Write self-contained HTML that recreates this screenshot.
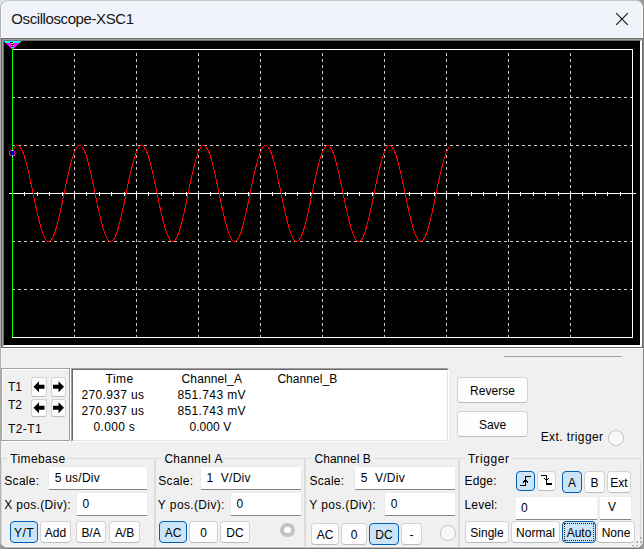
<!DOCTYPE html>
<html><head><meta charset="utf-8"><title>Oscilloscope-XSC1</title>
<style>
html,body{margin:0;padding:0}
body{width:644px;height:549px;overflow:hidden;background:#9c9c9c;position:relative;font-family:"Liberation Sans",sans-serif}
#win{position:absolute;left:0;top:0;width:642px;height:547px;background:#f0f0f0;border:1px solid;border-color:#c4c4c4 #8a8a8a #747474 #b0b0b0;border-radius:8px;overflow:hidden}
#tl{position:absolute;left:0;top:0;width:10px;height:10px;background:#e6e6e6}
#title{position:absolute;left:1px;top:1px;width:640px;height:36px;background:#f0f3f9;border:1px solid #fbfcfe;border-top:0}
#c{position:absolute;left:-1px;top:-1px;width:644px;height:549px}
.t{position:absolute;white-space:nowrap;line-height:1;color:#000}
.b{position:absolute;background:#fdfdfd;border:1px solid #d2d2d2;border-bottom-color:#bcbcbc;border-radius:4px}
.b.s{background:#cce4f7;border-color:#005fb0}
.f{position:absolute;border:1px dotted #222}
.e{position:absolute;background:#fff;box-sizing:border-box;border:1px solid #ececec;border-bottom:1px solid #868686;border-radius:2px}
.g{position:absolute;border:1px solid #dcdcdc;border-bottom-color:#f7f7f7}
.etw{position:absolute;border:1px solid #fff}
.etg{position:absolute;border:1px solid #a0a0a0}
.sunk2{position:absolute;border:1px solid;border-color:#a0a0a0 #fff #fff #a0a0a0}
.sunk2 div{position:absolute;left:0;top:0;right:0;bottom:0;background:#fff;border:1px solid;border-color:#696969 #e3e3e3 #e3e3e3 #696969}
.radio{position:absolute;width:13.5px;height:13.5px;border-radius:50%;border:1px solid #c0c0c0;background:#f8f8f8}
.ring{position:absolute;width:6.6px;height:6.6px;border-radius:50%;border:4.7px solid #c3c3c3;background:#fff}
</style></head><body>
<div id="tl"></div><div id="win"><div id="c">
<div id="title"></div>
<svg width="644" height="549" viewBox="0 0 644 549" shape-rendering="crispEdges" style="position:absolute;left:0;top:0"><rect x="1" y="38" width="642" height="310" fill="#6a6a6a"/><rect x="2" y="39" width="640" height="308" fill="#a0a0a0"/><rect x="3" y="40" width="639" height="307" fill="#707070"/><rect x="4" y="41" width="636" height="304" fill="#000"/><rect x="3" y="345" width="639" height="2" fill="#fff"/><rect x="640" y="40" width="2" height="307" fill="#fff"/><path d="M2 347 L4 345 L2 345 Z" fill="#a0a0a0"/><path d="M640 41 L642 39 L640 39 Z" fill="#a0a0a0"/><rect x="1" y="348" width="642" height="1" fill="#fff"/><rect x="13" y="49" width="620" height="1" fill="#fff"/><rect x="13" y="337" width="620" height="1" fill="#fff"/><rect x="632" y="49" width="1" height="289" fill="#fff"/><rect x="74" y="53" width="1" height="3" fill="#c8c8c8"/><rect x="74" y="59" width="1" height="3" fill="#c8c8c8"/><rect x="74" y="65" width="1" height="3" fill="#c8c8c8"/><rect x="74" y="71" width="1" height="3" fill="#c8c8c8"/><rect x="74" y="77" width="1" height="3" fill="#c8c8c8"/><rect x="74" y="83" width="1" height="3" fill="#c8c8c8"/><rect x="74" y="89" width="1" height="3" fill="#c8c8c8"/><rect x="74" y="95" width="1" height="3" fill="#c8c8c8"/><rect x="74" y="101" width="1" height="3" fill="#c8c8c8"/><rect x="74" y="107" width="1" height="3" fill="#c8c8c8"/><rect x="74" y="113" width="1" height="3" fill="#c8c8c8"/><rect x="74" y="119" width="1" height="3" fill="#c8c8c8"/><rect x="74" y="125" width="1" height="3" fill="#c8c8c8"/><rect x="74" y="131" width="1" height="3" fill="#c8c8c8"/><rect x="74" y="137" width="1" height="3" fill="#c8c8c8"/><rect x="74" y="143" width="1" height="3" fill="#c8c8c8"/><rect x="74" y="149" width="1" height="3" fill="#c8c8c8"/><rect x="74" y="155" width="1" height="3" fill="#c8c8c8"/><rect x="74" y="161" width="1" height="3" fill="#c8c8c8"/><rect x="74" y="167" width="1" height="3" fill="#c8c8c8"/><rect x="74" y="173" width="1" height="3" fill="#c8c8c8"/><rect x="74" y="179" width="1" height="3" fill="#c8c8c8"/><rect x="74" y="185" width="1" height="3" fill="#c8c8c8"/><rect x="74" y="191" width="1" height="3" fill="#c8c8c8"/><rect x="74" y="197" width="1" height="3" fill="#c8c8c8"/><rect x="74" y="203" width="1" height="3" fill="#c8c8c8"/><rect x="74" y="209" width="1" height="3" fill="#c8c8c8"/><rect x="74" y="215" width="1" height="3" fill="#c8c8c8"/><rect x="74" y="221" width="1" height="3" fill="#c8c8c8"/><rect x="74" y="227" width="1" height="3" fill="#c8c8c8"/><rect x="74" y="233" width="1" height="3" fill="#c8c8c8"/><rect x="74" y="239" width="1" height="3" fill="#c8c8c8"/><rect x="74" y="245" width="1" height="3" fill="#c8c8c8"/><rect x="74" y="251" width="1" height="3" fill="#c8c8c8"/><rect x="74" y="257" width="1" height="3" fill="#c8c8c8"/><rect x="74" y="263" width="1" height="3" fill="#c8c8c8"/><rect x="74" y="269" width="1" height="3" fill="#c8c8c8"/><rect x="74" y="275" width="1" height="3" fill="#c8c8c8"/><rect x="74" y="281" width="1" height="3" fill="#c8c8c8"/><rect x="74" y="287" width="1" height="3" fill="#c8c8c8"/><rect x="74" y="293" width="1" height="3" fill="#c8c8c8"/><rect x="74" y="299" width="1" height="3" fill="#c8c8c8"/><rect x="74" y="305" width="1" height="3" fill="#c8c8c8"/><rect x="74" y="311" width="1" height="3" fill="#c8c8c8"/><rect x="74" y="317" width="1" height="3" fill="#c8c8c8"/><rect x="74" y="323" width="1" height="3" fill="#c8c8c8"/><rect x="74" y="329" width="1" height="3" fill="#c8c8c8"/><rect x="74" y="335" width="1" height="2" fill="#c8c8c8"/><rect x="136" y="53" width="1" height="3" fill="#c8c8c8"/><rect x="136" y="59" width="1" height="3" fill="#c8c8c8"/><rect x="136" y="65" width="1" height="3" fill="#c8c8c8"/><rect x="136" y="71" width="1" height="3" fill="#c8c8c8"/><rect x="136" y="77" width="1" height="3" fill="#c8c8c8"/><rect x="136" y="83" width="1" height="3" fill="#c8c8c8"/><rect x="136" y="89" width="1" height="3" fill="#c8c8c8"/><rect x="136" y="95" width="1" height="3" fill="#c8c8c8"/><rect x="136" y="101" width="1" height="3" fill="#c8c8c8"/><rect x="136" y="107" width="1" height="3" fill="#c8c8c8"/><rect x="136" y="113" width="1" height="3" fill="#c8c8c8"/><rect x="136" y="119" width="1" height="3" fill="#c8c8c8"/><rect x="136" y="125" width="1" height="3" fill="#c8c8c8"/><rect x="136" y="131" width="1" height="3" fill="#c8c8c8"/><rect x="136" y="137" width="1" height="3" fill="#c8c8c8"/><rect x="136" y="143" width="1" height="3" fill="#c8c8c8"/><rect x="136" y="149" width="1" height="3" fill="#c8c8c8"/><rect x="136" y="155" width="1" height="3" fill="#c8c8c8"/><rect x="136" y="161" width="1" height="3" fill="#c8c8c8"/><rect x="136" y="167" width="1" height="3" fill="#c8c8c8"/><rect x="136" y="173" width="1" height="3" fill="#c8c8c8"/><rect x="136" y="179" width="1" height="3" fill="#c8c8c8"/><rect x="136" y="185" width="1" height="3" fill="#c8c8c8"/><rect x="136" y="191" width="1" height="3" fill="#c8c8c8"/><rect x="136" y="197" width="1" height="3" fill="#c8c8c8"/><rect x="136" y="203" width="1" height="3" fill="#c8c8c8"/><rect x="136" y="209" width="1" height="3" fill="#c8c8c8"/><rect x="136" y="215" width="1" height="3" fill="#c8c8c8"/><rect x="136" y="221" width="1" height="3" fill="#c8c8c8"/><rect x="136" y="227" width="1" height="3" fill="#c8c8c8"/><rect x="136" y="233" width="1" height="3" fill="#c8c8c8"/><rect x="136" y="239" width="1" height="3" fill="#c8c8c8"/><rect x="136" y="245" width="1" height="3" fill="#c8c8c8"/><rect x="136" y="251" width="1" height="3" fill="#c8c8c8"/><rect x="136" y="257" width="1" height="3" fill="#c8c8c8"/><rect x="136" y="263" width="1" height="3" fill="#c8c8c8"/><rect x="136" y="269" width="1" height="3" fill="#c8c8c8"/><rect x="136" y="275" width="1" height="3" fill="#c8c8c8"/><rect x="136" y="281" width="1" height="3" fill="#c8c8c8"/><rect x="136" y="287" width="1" height="3" fill="#c8c8c8"/><rect x="136" y="293" width="1" height="3" fill="#c8c8c8"/><rect x="136" y="299" width="1" height="3" fill="#c8c8c8"/><rect x="136" y="305" width="1" height="3" fill="#c8c8c8"/><rect x="136" y="311" width="1" height="3" fill="#c8c8c8"/><rect x="136" y="317" width="1" height="3" fill="#c8c8c8"/><rect x="136" y="323" width="1" height="3" fill="#c8c8c8"/><rect x="136" y="329" width="1" height="3" fill="#c8c8c8"/><rect x="136" y="335" width="1" height="2" fill="#c8c8c8"/><rect x="198" y="53" width="1" height="3" fill="#c8c8c8"/><rect x="198" y="59" width="1" height="3" fill="#c8c8c8"/><rect x="198" y="65" width="1" height="3" fill="#c8c8c8"/><rect x="198" y="71" width="1" height="3" fill="#c8c8c8"/><rect x="198" y="77" width="1" height="3" fill="#c8c8c8"/><rect x="198" y="83" width="1" height="3" fill="#c8c8c8"/><rect x="198" y="89" width="1" height="3" fill="#c8c8c8"/><rect x="198" y="95" width="1" height="3" fill="#c8c8c8"/><rect x="198" y="101" width="1" height="3" fill="#c8c8c8"/><rect x="198" y="107" width="1" height="3" fill="#c8c8c8"/><rect x="198" y="113" width="1" height="3" fill="#c8c8c8"/><rect x="198" y="119" width="1" height="3" fill="#c8c8c8"/><rect x="198" y="125" width="1" height="3" fill="#c8c8c8"/><rect x="198" y="131" width="1" height="3" fill="#c8c8c8"/><rect x="198" y="137" width="1" height="3" fill="#c8c8c8"/><rect x="198" y="143" width="1" height="3" fill="#c8c8c8"/><rect x="198" y="149" width="1" height="3" fill="#c8c8c8"/><rect x="198" y="155" width="1" height="3" fill="#c8c8c8"/><rect x="198" y="161" width="1" height="3" fill="#c8c8c8"/><rect x="198" y="167" width="1" height="3" fill="#c8c8c8"/><rect x="198" y="173" width="1" height="3" fill="#c8c8c8"/><rect x="198" y="179" width="1" height="3" fill="#c8c8c8"/><rect x="198" y="185" width="1" height="3" fill="#c8c8c8"/><rect x="198" y="191" width="1" height="3" fill="#c8c8c8"/><rect x="198" y="197" width="1" height="3" fill="#c8c8c8"/><rect x="198" y="203" width="1" height="3" fill="#c8c8c8"/><rect x="198" y="209" width="1" height="3" fill="#c8c8c8"/><rect x="198" y="215" width="1" height="3" fill="#c8c8c8"/><rect x="198" y="221" width="1" height="3" fill="#c8c8c8"/><rect x="198" y="227" width="1" height="3" fill="#c8c8c8"/><rect x="198" y="233" width="1" height="3" fill="#c8c8c8"/><rect x="198" y="239" width="1" height="3" fill="#c8c8c8"/><rect x="198" y="245" width="1" height="3" fill="#c8c8c8"/><rect x="198" y="251" width="1" height="3" fill="#c8c8c8"/><rect x="198" y="257" width="1" height="3" fill="#c8c8c8"/><rect x="198" y="263" width="1" height="3" fill="#c8c8c8"/><rect x="198" y="269" width="1" height="3" fill="#c8c8c8"/><rect x="198" y="275" width="1" height="3" fill="#c8c8c8"/><rect x="198" y="281" width="1" height="3" fill="#c8c8c8"/><rect x="198" y="287" width="1" height="3" fill="#c8c8c8"/><rect x="198" y="293" width="1" height="3" fill="#c8c8c8"/><rect x="198" y="299" width="1" height="3" fill="#c8c8c8"/><rect x="198" y="305" width="1" height="3" fill="#c8c8c8"/><rect x="198" y="311" width="1" height="3" fill="#c8c8c8"/><rect x="198" y="317" width="1" height="3" fill="#c8c8c8"/><rect x="198" y="323" width="1" height="3" fill="#c8c8c8"/><rect x="198" y="329" width="1" height="3" fill="#c8c8c8"/><rect x="198" y="335" width="1" height="2" fill="#c8c8c8"/><rect x="260" y="53" width="1" height="3" fill="#c8c8c8"/><rect x="260" y="59" width="1" height="3" fill="#c8c8c8"/><rect x="260" y="65" width="1" height="3" fill="#c8c8c8"/><rect x="260" y="71" width="1" height="3" fill="#c8c8c8"/><rect x="260" y="77" width="1" height="3" fill="#c8c8c8"/><rect x="260" y="83" width="1" height="3" fill="#c8c8c8"/><rect x="260" y="89" width="1" height="3" fill="#c8c8c8"/><rect x="260" y="95" width="1" height="3" fill="#c8c8c8"/><rect x="260" y="101" width="1" height="3" fill="#c8c8c8"/><rect x="260" y="107" width="1" height="3" fill="#c8c8c8"/><rect x="260" y="113" width="1" height="3" fill="#c8c8c8"/><rect x="260" y="119" width="1" height="3" fill="#c8c8c8"/><rect x="260" y="125" width="1" height="3" fill="#c8c8c8"/><rect x="260" y="131" width="1" height="3" fill="#c8c8c8"/><rect x="260" y="137" width="1" height="3" fill="#c8c8c8"/><rect x="260" y="143" width="1" height="3" fill="#c8c8c8"/><rect x="260" y="149" width="1" height="3" fill="#c8c8c8"/><rect x="260" y="155" width="1" height="3" fill="#c8c8c8"/><rect x="260" y="161" width="1" height="3" fill="#c8c8c8"/><rect x="260" y="167" width="1" height="3" fill="#c8c8c8"/><rect x="260" y="173" width="1" height="3" fill="#c8c8c8"/><rect x="260" y="179" width="1" height="3" fill="#c8c8c8"/><rect x="260" y="185" width="1" height="3" fill="#c8c8c8"/><rect x="260" y="191" width="1" height="3" fill="#c8c8c8"/><rect x="260" y="197" width="1" height="3" fill="#c8c8c8"/><rect x="260" y="203" width="1" height="3" fill="#c8c8c8"/><rect x="260" y="209" width="1" height="3" fill="#c8c8c8"/><rect x="260" y="215" width="1" height="3" fill="#c8c8c8"/><rect x="260" y="221" width="1" height="3" fill="#c8c8c8"/><rect x="260" y="227" width="1" height="3" fill="#c8c8c8"/><rect x="260" y="233" width="1" height="3" fill="#c8c8c8"/><rect x="260" y="239" width="1" height="3" fill="#c8c8c8"/><rect x="260" y="245" width="1" height="3" fill="#c8c8c8"/><rect x="260" y="251" width="1" height="3" fill="#c8c8c8"/><rect x="260" y="257" width="1" height="3" fill="#c8c8c8"/><rect x="260" y="263" width="1" height="3" fill="#c8c8c8"/><rect x="260" y="269" width="1" height="3" fill="#c8c8c8"/><rect x="260" y="275" width="1" height="3" fill="#c8c8c8"/><rect x="260" y="281" width="1" height="3" fill="#c8c8c8"/><rect x="260" y="287" width="1" height="3" fill="#c8c8c8"/><rect x="260" y="293" width="1" height="3" fill="#c8c8c8"/><rect x="260" y="299" width="1" height="3" fill="#c8c8c8"/><rect x="260" y="305" width="1" height="3" fill="#c8c8c8"/><rect x="260" y="311" width="1" height="3" fill="#c8c8c8"/><rect x="260" y="317" width="1" height="3" fill="#c8c8c8"/><rect x="260" y="323" width="1" height="3" fill="#c8c8c8"/><rect x="260" y="329" width="1" height="3" fill="#c8c8c8"/><rect x="260" y="335" width="1" height="2" fill="#c8c8c8"/><rect x="322" y="53" width="1" height="3" fill="#c8c8c8"/><rect x="322" y="59" width="1" height="3" fill="#c8c8c8"/><rect x="322" y="65" width="1" height="3" fill="#c8c8c8"/><rect x="322" y="71" width="1" height="3" fill="#c8c8c8"/><rect x="322" y="77" width="1" height="3" fill="#c8c8c8"/><rect x="322" y="83" width="1" height="3" fill="#c8c8c8"/><rect x="322" y="89" width="1" height="3" fill="#c8c8c8"/><rect x="322" y="95" width="1" height="3" fill="#c8c8c8"/><rect x="322" y="101" width="1" height="3" fill="#c8c8c8"/><rect x="322" y="107" width="1" height="3" fill="#c8c8c8"/><rect x="322" y="113" width="1" height="3" fill="#c8c8c8"/><rect x="322" y="119" width="1" height="3" fill="#c8c8c8"/><rect x="322" y="125" width="1" height="3" fill="#c8c8c8"/><rect x="322" y="131" width="1" height="3" fill="#c8c8c8"/><rect x="322" y="137" width="1" height="3" fill="#c8c8c8"/><rect x="322" y="143" width="1" height="3" fill="#c8c8c8"/><rect x="322" y="149" width="1" height="3" fill="#c8c8c8"/><rect x="322" y="155" width="1" height="3" fill="#c8c8c8"/><rect x="322" y="161" width="1" height="3" fill="#c8c8c8"/><rect x="322" y="167" width="1" height="3" fill="#c8c8c8"/><rect x="322" y="173" width="1" height="3" fill="#c8c8c8"/><rect x="322" y="179" width="1" height="3" fill="#c8c8c8"/><rect x="322" y="185" width="1" height="3" fill="#c8c8c8"/><rect x="322" y="191" width="1" height="3" fill="#c8c8c8"/><rect x="322" y="197" width="1" height="3" fill="#c8c8c8"/><rect x="322" y="203" width="1" height="3" fill="#c8c8c8"/><rect x="322" y="209" width="1" height="3" fill="#c8c8c8"/><rect x="322" y="215" width="1" height="3" fill="#c8c8c8"/><rect x="322" y="221" width="1" height="3" fill="#c8c8c8"/><rect x="322" y="227" width="1" height="3" fill="#c8c8c8"/><rect x="322" y="233" width="1" height="3" fill="#c8c8c8"/><rect x="322" y="239" width="1" height="3" fill="#c8c8c8"/><rect x="322" y="245" width="1" height="3" fill="#c8c8c8"/><rect x="322" y="251" width="1" height="3" fill="#c8c8c8"/><rect x="322" y="257" width="1" height="3" fill="#c8c8c8"/><rect x="322" y="263" width="1" height="3" fill="#c8c8c8"/><rect x="322" y="269" width="1" height="3" fill="#c8c8c8"/><rect x="322" y="275" width="1" height="3" fill="#c8c8c8"/><rect x="322" y="281" width="1" height="3" fill="#c8c8c8"/><rect x="322" y="287" width="1" height="3" fill="#c8c8c8"/><rect x="322" y="293" width="1" height="3" fill="#c8c8c8"/><rect x="322" y="299" width="1" height="3" fill="#c8c8c8"/><rect x="322" y="305" width="1" height="3" fill="#c8c8c8"/><rect x="322" y="311" width="1" height="3" fill="#c8c8c8"/><rect x="322" y="317" width="1" height="3" fill="#c8c8c8"/><rect x="322" y="323" width="1" height="3" fill="#c8c8c8"/><rect x="322" y="329" width="1" height="3" fill="#c8c8c8"/><rect x="322" y="335" width="1" height="2" fill="#c8c8c8"/><rect x="384" y="53" width="1" height="3" fill="#c8c8c8"/><rect x="384" y="59" width="1" height="3" fill="#c8c8c8"/><rect x="384" y="65" width="1" height="3" fill="#c8c8c8"/><rect x="384" y="71" width="1" height="3" fill="#c8c8c8"/><rect x="384" y="77" width="1" height="3" fill="#c8c8c8"/><rect x="384" y="83" width="1" height="3" fill="#c8c8c8"/><rect x="384" y="89" width="1" height="3" fill="#c8c8c8"/><rect x="384" y="95" width="1" height="3" fill="#c8c8c8"/><rect x="384" y="101" width="1" height="3" fill="#c8c8c8"/><rect x="384" y="107" width="1" height="3" fill="#c8c8c8"/><rect x="384" y="113" width="1" height="3" fill="#c8c8c8"/><rect x="384" y="119" width="1" height="3" fill="#c8c8c8"/><rect x="384" y="125" width="1" height="3" fill="#c8c8c8"/><rect x="384" y="131" width="1" height="3" fill="#c8c8c8"/><rect x="384" y="137" width="1" height="3" fill="#c8c8c8"/><rect x="384" y="143" width="1" height="3" fill="#c8c8c8"/><rect x="384" y="149" width="1" height="3" fill="#c8c8c8"/><rect x="384" y="155" width="1" height="3" fill="#c8c8c8"/><rect x="384" y="161" width="1" height="3" fill="#c8c8c8"/><rect x="384" y="167" width="1" height="3" fill="#c8c8c8"/><rect x="384" y="173" width="1" height="3" fill="#c8c8c8"/><rect x="384" y="179" width="1" height="3" fill="#c8c8c8"/><rect x="384" y="185" width="1" height="3" fill="#c8c8c8"/><rect x="384" y="191" width="1" height="3" fill="#c8c8c8"/><rect x="384" y="197" width="1" height="3" fill="#c8c8c8"/><rect x="384" y="203" width="1" height="3" fill="#c8c8c8"/><rect x="384" y="209" width="1" height="3" fill="#c8c8c8"/><rect x="384" y="215" width="1" height="3" fill="#c8c8c8"/><rect x="384" y="221" width="1" height="3" fill="#c8c8c8"/><rect x="384" y="227" width="1" height="3" fill="#c8c8c8"/><rect x="384" y="233" width="1" height="3" fill="#c8c8c8"/><rect x="384" y="239" width="1" height="3" fill="#c8c8c8"/><rect x="384" y="245" width="1" height="3" fill="#c8c8c8"/><rect x="384" y="251" width="1" height="3" fill="#c8c8c8"/><rect x="384" y="257" width="1" height="3" fill="#c8c8c8"/><rect x="384" y="263" width="1" height="3" fill="#c8c8c8"/><rect x="384" y="269" width="1" height="3" fill="#c8c8c8"/><rect x="384" y="275" width="1" height="3" fill="#c8c8c8"/><rect x="384" y="281" width="1" height="3" fill="#c8c8c8"/><rect x="384" y="287" width="1" height="3" fill="#c8c8c8"/><rect x="384" y="293" width="1" height="3" fill="#c8c8c8"/><rect x="384" y="299" width="1" height="3" fill="#c8c8c8"/><rect x="384" y="305" width="1" height="3" fill="#c8c8c8"/><rect x="384" y="311" width="1" height="3" fill="#c8c8c8"/><rect x="384" y="317" width="1" height="3" fill="#c8c8c8"/><rect x="384" y="323" width="1" height="3" fill="#c8c8c8"/><rect x="384" y="329" width="1" height="3" fill="#c8c8c8"/><rect x="384" y="335" width="1" height="2" fill="#c8c8c8"/><rect x="446" y="53" width="1" height="3" fill="#c8c8c8"/><rect x="446" y="59" width="1" height="3" fill="#c8c8c8"/><rect x="446" y="65" width="1" height="3" fill="#c8c8c8"/><rect x="446" y="71" width="1" height="3" fill="#c8c8c8"/><rect x="446" y="77" width="1" height="3" fill="#c8c8c8"/><rect x="446" y="83" width="1" height="3" fill="#c8c8c8"/><rect x="446" y="89" width="1" height="3" fill="#c8c8c8"/><rect x="446" y="95" width="1" height="3" fill="#c8c8c8"/><rect x="446" y="101" width="1" height="3" fill="#c8c8c8"/><rect x="446" y="107" width="1" height="3" fill="#c8c8c8"/><rect x="446" y="113" width="1" height="3" fill="#c8c8c8"/><rect x="446" y="119" width="1" height="3" fill="#c8c8c8"/><rect x="446" y="125" width="1" height="3" fill="#c8c8c8"/><rect x="446" y="131" width="1" height="3" fill="#c8c8c8"/><rect x="446" y="137" width="1" height="3" fill="#c8c8c8"/><rect x="446" y="143" width="1" height="3" fill="#c8c8c8"/><rect x="446" y="149" width="1" height="3" fill="#c8c8c8"/><rect x="446" y="155" width="1" height="3" fill="#c8c8c8"/><rect x="446" y="161" width="1" height="3" fill="#c8c8c8"/><rect x="446" y="167" width="1" height="3" fill="#c8c8c8"/><rect x="446" y="173" width="1" height="3" fill="#c8c8c8"/><rect x="446" y="179" width="1" height="3" fill="#c8c8c8"/><rect x="446" y="185" width="1" height="3" fill="#c8c8c8"/><rect x="446" y="191" width="1" height="3" fill="#c8c8c8"/><rect x="446" y="197" width="1" height="3" fill="#c8c8c8"/><rect x="446" y="203" width="1" height="3" fill="#c8c8c8"/><rect x="446" y="209" width="1" height="3" fill="#c8c8c8"/><rect x="446" y="215" width="1" height="3" fill="#c8c8c8"/><rect x="446" y="221" width="1" height="3" fill="#c8c8c8"/><rect x="446" y="227" width="1" height="3" fill="#c8c8c8"/><rect x="446" y="233" width="1" height="3" fill="#c8c8c8"/><rect x="446" y="239" width="1" height="3" fill="#c8c8c8"/><rect x="446" y="245" width="1" height="3" fill="#c8c8c8"/><rect x="446" y="251" width="1" height="3" fill="#c8c8c8"/><rect x="446" y="257" width="1" height="3" fill="#c8c8c8"/><rect x="446" y="263" width="1" height="3" fill="#c8c8c8"/><rect x="446" y="269" width="1" height="3" fill="#c8c8c8"/><rect x="446" y="275" width="1" height="3" fill="#c8c8c8"/><rect x="446" y="281" width="1" height="3" fill="#c8c8c8"/><rect x="446" y="287" width="1" height="3" fill="#c8c8c8"/><rect x="446" y="293" width="1" height="3" fill="#c8c8c8"/><rect x="446" y="299" width="1" height="3" fill="#c8c8c8"/><rect x="446" y="305" width="1" height="3" fill="#c8c8c8"/><rect x="446" y="311" width="1" height="3" fill="#c8c8c8"/><rect x="446" y="317" width="1" height="3" fill="#c8c8c8"/><rect x="446" y="323" width="1" height="3" fill="#c8c8c8"/><rect x="446" y="329" width="1" height="3" fill="#c8c8c8"/><rect x="446" y="335" width="1" height="2" fill="#c8c8c8"/><rect x="508" y="53" width="1" height="3" fill="#c8c8c8"/><rect x="508" y="59" width="1" height="3" fill="#c8c8c8"/><rect x="508" y="65" width="1" height="3" fill="#c8c8c8"/><rect x="508" y="71" width="1" height="3" fill="#c8c8c8"/><rect x="508" y="77" width="1" height="3" fill="#c8c8c8"/><rect x="508" y="83" width="1" height="3" fill="#c8c8c8"/><rect x="508" y="89" width="1" height="3" fill="#c8c8c8"/><rect x="508" y="95" width="1" height="3" fill="#c8c8c8"/><rect x="508" y="101" width="1" height="3" fill="#c8c8c8"/><rect x="508" y="107" width="1" height="3" fill="#c8c8c8"/><rect x="508" y="113" width="1" height="3" fill="#c8c8c8"/><rect x="508" y="119" width="1" height="3" fill="#c8c8c8"/><rect x="508" y="125" width="1" height="3" fill="#c8c8c8"/><rect x="508" y="131" width="1" height="3" fill="#c8c8c8"/><rect x="508" y="137" width="1" height="3" fill="#c8c8c8"/><rect x="508" y="143" width="1" height="3" fill="#c8c8c8"/><rect x="508" y="149" width="1" height="3" fill="#c8c8c8"/><rect x="508" y="155" width="1" height="3" fill="#c8c8c8"/><rect x="508" y="161" width="1" height="3" fill="#c8c8c8"/><rect x="508" y="167" width="1" height="3" fill="#c8c8c8"/><rect x="508" y="173" width="1" height="3" fill="#c8c8c8"/><rect x="508" y="179" width="1" height="3" fill="#c8c8c8"/><rect x="508" y="185" width="1" height="3" fill="#c8c8c8"/><rect x="508" y="191" width="1" height="3" fill="#c8c8c8"/><rect x="508" y="197" width="1" height="3" fill="#c8c8c8"/><rect x="508" y="203" width="1" height="3" fill="#c8c8c8"/><rect x="508" y="209" width="1" height="3" fill="#c8c8c8"/><rect x="508" y="215" width="1" height="3" fill="#c8c8c8"/><rect x="508" y="221" width="1" height="3" fill="#c8c8c8"/><rect x="508" y="227" width="1" height="3" fill="#c8c8c8"/><rect x="508" y="233" width="1" height="3" fill="#c8c8c8"/><rect x="508" y="239" width="1" height="3" fill="#c8c8c8"/><rect x="508" y="245" width="1" height="3" fill="#c8c8c8"/><rect x="508" y="251" width="1" height="3" fill="#c8c8c8"/><rect x="508" y="257" width="1" height="3" fill="#c8c8c8"/><rect x="508" y="263" width="1" height="3" fill="#c8c8c8"/><rect x="508" y="269" width="1" height="3" fill="#c8c8c8"/><rect x="508" y="275" width="1" height="3" fill="#c8c8c8"/><rect x="508" y="281" width="1" height="3" fill="#c8c8c8"/><rect x="508" y="287" width="1" height="3" fill="#c8c8c8"/><rect x="508" y="293" width="1" height="3" fill="#c8c8c8"/><rect x="508" y="299" width="1" height="3" fill="#c8c8c8"/><rect x="508" y="305" width="1" height="3" fill="#c8c8c8"/><rect x="508" y="311" width="1" height="3" fill="#c8c8c8"/><rect x="508" y="317" width="1" height="3" fill="#c8c8c8"/><rect x="508" y="323" width="1" height="3" fill="#c8c8c8"/><rect x="508" y="329" width="1" height="3" fill="#c8c8c8"/><rect x="508" y="335" width="1" height="2" fill="#c8c8c8"/><rect x="570" y="53" width="1" height="3" fill="#c8c8c8"/><rect x="570" y="59" width="1" height="3" fill="#c8c8c8"/><rect x="570" y="65" width="1" height="3" fill="#c8c8c8"/><rect x="570" y="71" width="1" height="3" fill="#c8c8c8"/><rect x="570" y="77" width="1" height="3" fill="#c8c8c8"/><rect x="570" y="83" width="1" height="3" fill="#c8c8c8"/><rect x="570" y="89" width="1" height="3" fill="#c8c8c8"/><rect x="570" y="95" width="1" height="3" fill="#c8c8c8"/><rect x="570" y="101" width="1" height="3" fill="#c8c8c8"/><rect x="570" y="107" width="1" height="3" fill="#c8c8c8"/><rect x="570" y="113" width="1" height="3" fill="#c8c8c8"/><rect x="570" y="119" width="1" height="3" fill="#c8c8c8"/><rect x="570" y="125" width="1" height="3" fill="#c8c8c8"/><rect x="570" y="131" width="1" height="3" fill="#c8c8c8"/><rect x="570" y="137" width="1" height="3" fill="#c8c8c8"/><rect x="570" y="143" width="1" height="3" fill="#c8c8c8"/><rect x="570" y="149" width="1" height="3" fill="#c8c8c8"/><rect x="570" y="155" width="1" height="3" fill="#c8c8c8"/><rect x="570" y="161" width="1" height="3" fill="#c8c8c8"/><rect x="570" y="167" width="1" height="3" fill="#c8c8c8"/><rect x="570" y="173" width="1" height="3" fill="#c8c8c8"/><rect x="570" y="179" width="1" height="3" fill="#c8c8c8"/><rect x="570" y="185" width="1" height="3" fill="#c8c8c8"/><rect x="570" y="191" width="1" height="3" fill="#c8c8c8"/><rect x="570" y="197" width="1" height="3" fill="#c8c8c8"/><rect x="570" y="203" width="1" height="3" fill="#c8c8c8"/><rect x="570" y="209" width="1" height="3" fill="#c8c8c8"/><rect x="570" y="215" width="1" height="3" fill="#c8c8c8"/><rect x="570" y="221" width="1" height="3" fill="#c8c8c8"/><rect x="570" y="227" width="1" height="3" fill="#c8c8c8"/><rect x="570" y="233" width="1" height="3" fill="#c8c8c8"/><rect x="570" y="239" width="1" height="3" fill="#c8c8c8"/><rect x="570" y="245" width="1" height="3" fill="#c8c8c8"/><rect x="570" y="251" width="1" height="3" fill="#c8c8c8"/><rect x="570" y="257" width="1" height="3" fill="#c8c8c8"/><rect x="570" y="263" width="1" height="3" fill="#c8c8c8"/><rect x="570" y="269" width="1" height="3" fill="#c8c8c8"/><rect x="570" y="275" width="1" height="3" fill="#c8c8c8"/><rect x="570" y="281" width="1" height="3" fill="#c8c8c8"/><rect x="570" y="287" width="1" height="3" fill="#c8c8c8"/><rect x="570" y="293" width="1" height="3" fill="#c8c8c8"/><rect x="570" y="299" width="1" height="3" fill="#c8c8c8"/><rect x="570" y="305" width="1" height="3" fill="#c8c8c8"/><rect x="570" y="311" width="1" height="3" fill="#c8c8c8"/><rect x="570" y="317" width="1" height="3" fill="#c8c8c8"/><rect x="570" y="323" width="1" height="3" fill="#c8c8c8"/><rect x="570" y="329" width="1" height="3" fill="#c8c8c8"/><rect x="570" y="335" width="1" height="2" fill="#c8c8c8"/><rect x="12" y="97" width="3" height="1" fill="#c8c8c8"/><rect x="18" y="97" width="3" height="1" fill="#c8c8c8"/><rect x="24" y="97" width="3" height="1" fill="#c8c8c8"/><rect x="30" y="97" width="3" height="1" fill="#c8c8c8"/><rect x="36" y="97" width="3" height="1" fill="#c8c8c8"/><rect x="42" y="97" width="3" height="1" fill="#c8c8c8"/><rect x="48" y="97" width="3" height="1" fill="#c8c8c8"/><rect x="54" y="97" width="3" height="1" fill="#c8c8c8"/><rect x="60" y="97" width="3" height="1" fill="#c8c8c8"/><rect x="66" y="97" width="3" height="1" fill="#c8c8c8"/><rect x="72" y="97" width="3" height="1" fill="#c8c8c8"/><rect x="78" y="97" width="3" height="1" fill="#c8c8c8"/><rect x="84" y="97" width="3" height="1" fill="#c8c8c8"/><rect x="90" y="97" width="3" height="1" fill="#c8c8c8"/><rect x="96" y="97" width="3" height="1" fill="#c8c8c8"/><rect x="102" y="97" width="3" height="1" fill="#c8c8c8"/><rect x="108" y="97" width="3" height="1" fill="#c8c8c8"/><rect x="114" y="97" width="3" height="1" fill="#c8c8c8"/><rect x="120" y="97" width="3" height="1" fill="#c8c8c8"/><rect x="126" y="97" width="3" height="1" fill="#c8c8c8"/><rect x="132" y="97" width="3" height="1" fill="#c8c8c8"/><rect x="138" y="97" width="3" height="1" fill="#c8c8c8"/><rect x="144" y="97" width="3" height="1" fill="#c8c8c8"/><rect x="150" y="97" width="3" height="1" fill="#c8c8c8"/><rect x="156" y="97" width="3" height="1" fill="#c8c8c8"/><rect x="162" y="97" width="3" height="1" fill="#c8c8c8"/><rect x="168" y="97" width="3" height="1" fill="#c8c8c8"/><rect x="174" y="97" width="3" height="1" fill="#c8c8c8"/><rect x="180" y="97" width="3" height="1" fill="#c8c8c8"/><rect x="186" y="97" width="3" height="1" fill="#c8c8c8"/><rect x="192" y="97" width="3" height="1" fill="#c8c8c8"/><rect x="198" y="97" width="3" height="1" fill="#c8c8c8"/><rect x="204" y="97" width="3" height="1" fill="#c8c8c8"/><rect x="210" y="97" width="3" height="1" fill="#c8c8c8"/><rect x="216" y="97" width="3" height="1" fill="#c8c8c8"/><rect x="222" y="97" width="3" height="1" fill="#c8c8c8"/><rect x="228" y="97" width="3" height="1" fill="#c8c8c8"/><rect x="234" y="97" width="3" height="1" fill="#c8c8c8"/><rect x="240" y="97" width="3" height="1" fill="#c8c8c8"/><rect x="246" y="97" width="3" height="1" fill="#c8c8c8"/><rect x="252" y="97" width="3" height="1" fill="#c8c8c8"/><rect x="258" y="97" width="3" height="1" fill="#c8c8c8"/><rect x="264" y="97" width="3" height="1" fill="#c8c8c8"/><rect x="270" y="97" width="3" height="1" fill="#c8c8c8"/><rect x="276" y="97" width="3" height="1" fill="#c8c8c8"/><rect x="282" y="97" width="3" height="1" fill="#c8c8c8"/><rect x="288" y="97" width="3" height="1" fill="#c8c8c8"/><rect x="294" y="97" width="3" height="1" fill="#c8c8c8"/><rect x="300" y="97" width="3" height="1" fill="#c8c8c8"/><rect x="306" y="97" width="3" height="1" fill="#c8c8c8"/><rect x="312" y="97" width="3" height="1" fill="#c8c8c8"/><rect x="318" y="97" width="3" height="1" fill="#c8c8c8"/><rect x="324" y="97" width="3" height="1" fill="#c8c8c8"/><rect x="330" y="97" width="3" height="1" fill="#c8c8c8"/><rect x="336" y="97" width="3" height="1" fill="#c8c8c8"/><rect x="342" y="97" width="3" height="1" fill="#c8c8c8"/><rect x="348" y="97" width="3" height="1" fill="#c8c8c8"/><rect x="354" y="97" width="3" height="1" fill="#c8c8c8"/><rect x="360" y="97" width="3" height="1" fill="#c8c8c8"/><rect x="366" y="97" width="3" height="1" fill="#c8c8c8"/><rect x="372" y="97" width="3" height="1" fill="#c8c8c8"/><rect x="378" y="97" width="3" height="1" fill="#c8c8c8"/><rect x="384" y="97" width="3" height="1" fill="#c8c8c8"/><rect x="390" y="97" width="3" height="1" fill="#c8c8c8"/><rect x="396" y="97" width="3" height="1" fill="#c8c8c8"/><rect x="402" y="97" width="3" height="1" fill="#c8c8c8"/><rect x="408" y="97" width="3" height="1" fill="#c8c8c8"/><rect x="414" y="97" width="3" height="1" fill="#c8c8c8"/><rect x="420" y="97" width="3" height="1" fill="#c8c8c8"/><rect x="426" y="97" width="3" height="1" fill="#c8c8c8"/><rect x="432" y="97" width="3" height="1" fill="#c8c8c8"/><rect x="438" y="97" width="3" height="1" fill="#c8c8c8"/><rect x="444" y="97" width="3" height="1" fill="#c8c8c8"/><rect x="450" y="97" width="3" height="1" fill="#c8c8c8"/><rect x="456" y="97" width="3" height="1" fill="#c8c8c8"/><rect x="462" y="97" width="3" height="1" fill="#c8c8c8"/><rect x="468" y="97" width="3" height="1" fill="#c8c8c8"/><rect x="474" y="97" width="3" height="1" fill="#c8c8c8"/><rect x="480" y="97" width="3" height="1" fill="#c8c8c8"/><rect x="486" y="97" width="3" height="1" fill="#c8c8c8"/><rect x="492" y="97" width="3" height="1" fill="#c8c8c8"/><rect x="498" y="97" width="3" height="1" fill="#c8c8c8"/><rect x="504" y="97" width="3" height="1" fill="#c8c8c8"/><rect x="510" y="97" width="3" height="1" fill="#c8c8c8"/><rect x="516" y="97" width="3" height="1" fill="#c8c8c8"/><rect x="522" y="97" width="3" height="1" fill="#c8c8c8"/><rect x="528" y="97" width="3" height="1" fill="#c8c8c8"/><rect x="534" y="97" width="3" height="1" fill="#c8c8c8"/><rect x="540" y="97" width="3" height="1" fill="#c8c8c8"/><rect x="546" y="97" width="3" height="1" fill="#c8c8c8"/><rect x="552" y="97" width="3" height="1" fill="#c8c8c8"/><rect x="558" y="97" width="3" height="1" fill="#c8c8c8"/><rect x="564" y="97" width="3" height="1" fill="#c8c8c8"/><rect x="570" y="97" width="3" height="1" fill="#c8c8c8"/><rect x="576" y="97" width="3" height="1" fill="#c8c8c8"/><rect x="582" y="97" width="3" height="1" fill="#c8c8c8"/><rect x="588" y="97" width="3" height="1" fill="#c8c8c8"/><rect x="594" y="97" width="3" height="1" fill="#c8c8c8"/><rect x="600" y="97" width="3" height="1" fill="#c8c8c8"/><rect x="606" y="97" width="3" height="1" fill="#c8c8c8"/><rect x="612" y="97" width="3" height="1" fill="#c8c8c8"/><rect x="618" y="97" width="3" height="1" fill="#c8c8c8"/><rect x="624" y="97" width="3" height="1" fill="#c8c8c8"/><rect x="630" y="97" width="2" height="1" fill="#c8c8c8"/><rect x="12" y="145" width="3" height="1" fill="#c8c8c8"/><rect x="18" y="145" width="3" height="1" fill="#c8c8c8"/><rect x="24" y="145" width="3" height="1" fill="#c8c8c8"/><rect x="30" y="145" width="3" height="1" fill="#c8c8c8"/><rect x="36" y="145" width="3" height="1" fill="#c8c8c8"/><rect x="42" y="145" width="3" height="1" fill="#c8c8c8"/><rect x="48" y="145" width="3" height="1" fill="#c8c8c8"/><rect x="54" y="145" width="3" height="1" fill="#c8c8c8"/><rect x="60" y="145" width="3" height="1" fill="#c8c8c8"/><rect x="66" y="145" width="3" height="1" fill="#c8c8c8"/><rect x="72" y="145" width="3" height="1" fill="#c8c8c8"/><rect x="78" y="145" width="3" height="1" fill="#c8c8c8"/><rect x="84" y="145" width="3" height="1" fill="#c8c8c8"/><rect x="90" y="145" width="3" height="1" fill="#c8c8c8"/><rect x="96" y="145" width="3" height="1" fill="#c8c8c8"/><rect x="102" y="145" width="3" height="1" fill="#c8c8c8"/><rect x="108" y="145" width="3" height="1" fill="#c8c8c8"/><rect x="114" y="145" width="3" height="1" fill="#c8c8c8"/><rect x="120" y="145" width="3" height="1" fill="#c8c8c8"/><rect x="126" y="145" width="3" height="1" fill="#c8c8c8"/><rect x="132" y="145" width="3" height="1" fill="#c8c8c8"/><rect x="138" y="145" width="3" height="1" fill="#c8c8c8"/><rect x="144" y="145" width="3" height="1" fill="#c8c8c8"/><rect x="150" y="145" width="3" height="1" fill="#c8c8c8"/><rect x="156" y="145" width="3" height="1" fill="#c8c8c8"/><rect x="162" y="145" width="3" height="1" fill="#c8c8c8"/><rect x="168" y="145" width="3" height="1" fill="#c8c8c8"/><rect x="174" y="145" width="3" height="1" fill="#c8c8c8"/><rect x="180" y="145" width="3" height="1" fill="#c8c8c8"/><rect x="186" y="145" width="3" height="1" fill="#c8c8c8"/><rect x="192" y="145" width="3" height="1" fill="#c8c8c8"/><rect x="198" y="145" width="3" height="1" fill="#c8c8c8"/><rect x="204" y="145" width="3" height="1" fill="#c8c8c8"/><rect x="210" y="145" width="3" height="1" fill="#c8c8c8"/><rect x="216" y="145" width="3" height="1" fill="#c8c8c8"/><rect x="222" y="145" width="3" height="1" fill="#c8c8c8"/><rect x="228" y="145" width="3" height="1" fill="#c8c8c8"/><rect x="234" y="145" width="3" height="1" fill="#c8c8c8"/><rect x="240" y="145" width="3" height="1" fill="#c8c8c8"/><rect x="246" y="145" width="3" height="1" fill="#c8c8c8"/><rect x="252" y="145" width="3" height="1" fill="#c8c8c8"/><rect x="258" y="145" width="3" height="1" fill="#c8c8c8"/><rect x="264" y="145" width="3" height="1" fill="#c8c8c8"/><rect x="270" y="145" width="3" height="1" fill="#c8c8c8"/><rect x="276" y="145" width="3" height="1" fill="#c8c8c8"/><rect x="282" y="145" width="3" height="1" fill="#c8c8c8"/><rect x="288" y="145" width="3" height="1" fill="#c8c8c8"/><rect x="294" y="145" width="3" height="1" fill="#c8c8c8"/><rect x="300" y="145" width="3" height="1" fill="#c8c8c8"/><rect x="306" y="145" width="3" height="1" fill="#c8c8c8"/><rect x="312" y="145" width="3" height="1" fill="#c8c8c8"/><rect x="318" y="145" width="3" height="1" fill="#c8c8c8"/><rect x="324" y="145" width="3" height="1" fill="#c8c8c8"/><rect x="330" y="145" width="3" height="1" fill="#c8c8c8"/><rect x="336" y="145" width="3" height="1" fill="#c8c8c8"/><rect x="342" y="145" width="3" height="1" fill="#c8c8c8"/><rect x="348" y="145" width="3" height="1" fill="#c8c8c8"/><rect x="354" y="145" width="3" height="1" fill="#c8c8c8"/><rect x="360" y="145" width="3" height="1" fill="#c8c8c8"/><rect x="366" y="145" width="3" height="1" fill="#c8c8c8"/><rect x="372" y="145" width="3" height="1" fill="#c8c8c8"/><rect x="378" y="145" width="3" height="1" fill="#c8c8c8"/><rect x="384" y="145" width="3" height="1" fill="#c8c8c8"/><rect x="390" y="145" width="3" height="1" fill="#c8c8c8"/><rect x="396" y="145" width="3" height="1" fill="#c8c8c8"/><rect x="402" y="145" width="3" height="1" fill="#c8c8c8"/><rect x="408" y="145" width="3" height="1" fill="#c8c8c8"/><rect x="414" y="145" width="3" height="1" fill="#c8c8c8"/><rect x="420" y="145" width="3" height="1" fill="#c8c8c8"/><rect x="426" y="145" width="3" height="1" fill="#c8c8c8"/><rect x="432" y="145" width="3" height="1" fill="#c8c8c8"/><rect x="438" y="145" width="3" height="1" fill="#c8c8c8"/><rect x="444" y="145" width="3" height="1" fill="#c8c8c8"/><rect x="450" y="145" width="3" height="1" fill="#c8c8c8"/><rect x="456" y="145" width="3" height="1" fill="#c8c8c8"/><rect x="462" y="145" width="3" height="1" fill="#c8c8c8"/><rect x="468" y="145" width="3" height="1" fill="#c8c8c8"/><rect x="474" y="145" width="3" height="1" fill="#c8c8c8"/><rect x="480" y="145" width="3" height="1" fill="#c8c8c8"/><rect x="486" y="145" width="3" height="1" fill="#c8c8c8"/><rect x="492" y="145" width="3" height="1" fill="#c8c8c8"/><rect x="498" y="145" width="3" height="1" fill="#c8c8c8"/><rect x="504" y="145" width="3" height="1" fill="#c8c8c8"/><rect x="510" y="145" width="3" height="1" fill="#c8c8c8"/><rect x="516" y="145" width="3" height="1" fill="#c8c8c8"/><rect x="522" y="145" width="3" height="1" fill="#c8c8c8"/><rect x="528" y="145" width="3" height="1" fill="#c8c8c8"/><rect x="534" y="145" width="3" height="1" fill="#c8c8c8"/><rect x="540" y="145" width="3" height="1" fill="#c8c8c8"/><rect x="546" y="145" width="3" height="1" fill="#c8c8c8"/><rect x="552" y="145" width="3" height="1" fill="#c8c8c8"/><rect x="558" y="145" width="3" height="1" fill="#c8c8c8"/><rect x="564" y="145" width="3" height="1" fill="#c8c8c8"/><rect x="570" y="145" width="3" height="1" fill="#c8c8c8"/><rect x="576" y="145" width="3" height="1" fill="#c8c8c8"/><rect x="582" y="145" width="3" height="1" fill="#c8c8c8"/><rect x="588" y="145" width="3" height="1" fill="#c8c8c8"/><rect x="594" y="145" width="3" height="1" fill="#c8c8c8"/><rect x="600" y="145" width="3" height="1" fill="#c8c8c8"/><rect x="606" y="145" width="3" height="1" fill="#c8c8c8"/><rect x="612" y="145" width="3" height="1" fill="#c8c8c8"/><rect x="618" y="145" width="3" height="1" fill="#c8c8c8"/><rect x="624" y="145" width="3" height="1" fill="#c8c8c8"/><rect x="630" y="145" width="2" height="1" fill="#c8c8c8"/><rect x="12" y="241" width="3" height="1" fill="#c8c8c8"/><rect x="18" y="241" width="3" height="1" fill="#c8c8c8"/><rect x="24" y="241" width="3" height="1" fill="#c8c8c8"/><rect x="30" y="241" width="3" height="1" fill="#c8c8c8"/><rect x="36" y="241" width="3" height="1" fill="#c8c8c8"/><rect x="42" y="241" width="3" height="1" fill="#c8c8c8"/><rect x="48" y="241" width="3" height="1" fill="#c8c8c8"/><rect x="54" y="241" width="3" height="1" fill="#c8c8c8"/><rect x="60" y="241" width="3" height="1" fill="#c8c8c8"/><rect x="66" y="241" width="3" height="1" fill="#c8c8c8"/><rect x="72" y="241" width="3" height="1" fill="#c8c8c8"/><rect x="78" y="241" width="3" height="1" fill="#c8c8c8"/><rect x="84" y="241" width="3" height="1" fill="#c8c8c8"/><rect x="90" y="241" width="3" height="1" fill="#c8c8c8"/><rect x="96" y="241" width="3" height="1" fill="#c8c8c8"/><rect x="102" y="241" width="3" height="1" fill="#c8c8c8"/><rect x="108" y="241" width="3" height="1" fill="#c8c8c8"/><rect x="114" y="241" width="3" height="1" fill="#c8c8c8"/><rect x="120" y="241" width="3" height="1" fill="#c8c8c8"/><rect x="126" y="241" width="3" height="1" fill="#c8c8c8"/><rect x="132" y="241" width="3" height="1" fill="#c8c8c8"/><rect x="138" y="241" width="3" height="1" fill="#c8c8c8"/><rect x="144" y="241" width="3" height="1" fill="#c8c8c8"/><rect x="150" y="241" width="3" height="1" fill="#c8c8c8"/><rect x="156" y="241" width="3" height="1" fill="#c8c8c8"/><rect x="162" y="241" width="3" height="1" fill="#c8c8c8"/><rect x="168" y="241" width="3" height="1" fill="#c8c8c8"/><rect x="174" y="241" width="3" height="1" fill="#c8c8c8"/><rect x="180" y="241" width="3" height="1" fill="#c8c8c8"/><rect x="186" y="241" width="3" height="1" fill="#c8c8c8"/><rect x="192" y="241" width="3" height="1" fill="#c8c8c8"/><rect x="198" y="241" width="3" height="1" fill="#c8c8c8"/><rect x="204" y="241" width="3" height="1" fill="#c8c8c8"/><rect x="210" y="241" width="3" height="1" fill="#c8c8c8"/><rect x="216" y="241" width="3" height="1" fill="#c8c8c8"/><rect x="222" y="241" width="3" height="1" fill="#c8c8c8"/><rect x="228" y="241" width="3" height="1" fill="#c8c8c8"/><rect x="234" y="241" width="3" height="1" fill="#c8c8c8"/><rect x="240" y="241" width="3" height="1" fill="#c8c8c8"/><rect x="246" y="241" width="3" height="1" fill="#c8c8c8"/><rect x="252" y="241" width="3" height="1" fill="#c8c8c8"/><rect x="258" y="241" width="3" height="1" fill="#c8c8c8"/><rect x="264" y="241" width="3" height="1" fill="#c8c8c8"/><rect x="270" y="241" width="3" height="1" fill="#c8c8c8"/><rect x="276" y="241" width="3" height="1" fill="#c8c8c8"/><rect x="282" y="241" width="3" height="1" fill="#c8c8c8"/><rect x="288" y="241" width="3" height="1" fill="#c8c8c8"/><rect x="294" y="241" width="3" height="1" fill="#c8c8c8"/><rect x="300" y="241" width="3" height="1" fill="#c8c8c8"/><rect x="306" y="241" width="3" height="1" fill="#c8c8c8"/><rect x="312" y="241" width="3" height="1" fill="#c8c8c8"/><rect x="318" y="241" width="3" height="1" fill="#c8c8c8"/><rect x="324" y="241" width="3" height="1" fill="#c8c8c8"/><rect x="330" y="241" width="3" height="1" fill="#c8c8c8"/><rect x="336" y="241" width="3" height="1" fill="#c8c8c8"/><rect x="342" y="241" width="3" height="1" fill="#c8c8c8"/><rect x="348" y="241" width="3" height="1" fill="#c8c8c8"/><rect x="354" y="241" width="3" height="1" fill="#c8c8c8"/><rect x="360" y="241" width="3" height="1" fill="#c8c8c8"/><rect x="366" y="241" width="3" height="1" fill="#c8c8c8"/><rect x="372" y="241" width="3" height="1" fill="#c8c8c8"/><rect x="378" y="241" width="3" height="1" fill="#c8c8c8"/><rect x="384" y="241" width="3" height="1" fill="#c8c8c8"/><rect x="390" y="241" width="3" height="1" fill="#c8c8c8"/><rect x="396" y="241" width="3" height="1" fill="#c8c8c8"/><rect x="402" y="241" width="3" height="1" fill="#c8c8c8"/><rect x="408" y="241" width="3" height="1" fill="#c8c8c8"/><rect x="414" y="241" width="3" height="1" fill="#c8c8c8"/><rect x="420" y="241" width="3" height="1" fill="#c8c8c8"/><rect x="426" y="241" width="3" height="1" fill="#c8c8c8"/><rect x="432" y="241" width="3" height="1" fill="#c8c8c8"/><rect x="438" y="241" width="3" height="1" fill="#c8c8c8"/><rect x="444" y="241" width="3" height="1" fill="#c8c8c8"/><rect x="450" y="241" width="3" height="1" fill="#c8c8c8"/><rect x="456" y="241" width="3" height="1" fill="#c8c8c8"/><rect x="462" y="241" width="3" height="1" fill="#c8c8c8"/><rect x="468" y="241" width="3" height="1" fill="#c8c8c8"/><rect x="474" y="241" width="3" height="1" fill="#c8c8c8"/><rect x="480" y="241" width="3" height="1" fill="#c8c8c8"/><rect x="486" y="241" width="3" height="1" fill="#c8c8c8"/><rect x="492" y="241" width="3" height="1" fill="#c8c8c8"/><rect x="498" y="241" width="3" height="1" fill="#c8c8c8"/><rect x="504" y="241" width="3" height="1" fill="#c8c8c8"/><rect x="510" y="241" width="3" height="1" fill="#c8c8c8"/><rect x="516" y="241" width="3" height="1" fill="#c8c8c8"/><rect x="522" y="241" width="3" height="1" fill="#c8c8c8"/><rect x="528" y="241" width="3" height="1" fill="#c8c8c8"/><rect x="534" y="241" width="3" height="1" fill="#c8c8c8"/><rect x="540" y="241" width="3" height="1" fill="#c8c8c8"/><rect x="546" y="241" width="3" height="1" fill="#c8c8c8"/><rect x="552" y="241" width="3" height="1" fill="#c8c8c8"/><rect x="558" y="241" width="3" height="1" fill="#c8c8c8"/><rect x="564" y="241" width="3" height="1" fill="#c8c8c8"/><rect x="570" y="241" width="3" height="1" fill="#c8c8c8"/><rect x="576" y="241" width="3" height="1" fill="#c8c8c8"/><rect x="582" y="241" width="3" height="1" fill="#c8c8c8"/><rect x="588" y="241" width="3" height="1" fill="#c8c8c8"/><rect x="594" y="241" width="3" height="1" fill="#c8c8c8"/><rect x="600" y="241" width="3" height="1" fill="#c8c8c8"/><rect x="606" y="241" width="3" height="1" fill="#c8c8c8"/><rect x="612" y="241" width="3" height="1" fill="#c8c8c8"/><rect x="618" y="241" width="3" height="1" fill="#c8c8c8"/><rect x="624" y="241" width="3" height="1" fill="#c8c8c8"/><rect x="630" y="241" width="2" height="1" fill="#c8c8c8"/><rect x="12" y="289" width="3" height="1" fill="#c8c8c8"/><rect x="18" y="289" width="3" height="1" fill="#c8c8c8"/><rect x="24" y="289" width="3" height="1" fill="#c8c8c8"/><rect x="30" y="289" width="3" height="1" fill="#c8c8c8"/><rect x="36" y="289" width="3" height="1" fill="#c8c8c8"/><rect x="42" y="289" width="3" height="1" fill="#c8c8c8"/><rect x="48" y="289" width="3" height="1" fill="#c8c8c8"/><rect x="54" y="289" width="3" height="1" fill="#c8c8c8"/><rect x="60" y="289" width="3" height="1" fill="#c8c8c8"/><rect x="66" y="289" width="3" height="1" fill="#c8c8c8"/><rect x="72" y="289" width="3" height="1" fill="#c8c8c8"/><rect x="78" y="289" width="3" height="1" fill="#c8c8c8"/><rect x="84" y="289" width="3" height="1" fill="#c8c8c8"/><rect x="90" y="289" width="3" height="1" fill="#c8c8c8"/><rect x="96" y="289" width="3" height="1" fill="#c8c8c8"/><rect x="102" y="289" width="3" height="1" fill="#c8c8c8"/><rect x="108" y="289" width="3" height="1" fill="#c8c8c8"/><rect x="114" y="289" width="3" height="1" fill="#c8c8c8"/><rect x="120" y="289" width="3" height="1" fill="#c8c8c8"/><rect x="126" y="289" width="3" height="1" fill="#c8c8c8"/><rect x="132" y="289" width="3" height="1" fill="#c8c8c8"/><rect x="138" y="289" width="3" height="1" fill="#c8c8c8"/><rect x="144" y="289" width="3" height="1" fill="#c8c8c8"/><rect x="150" y="289" width="3" height="1" fill="#c8c8c8"/><rect x="156" y="289" width="3" height="1" fill="#c8c8c8"/><rect x="162" y="289" width="3" height="1" fill="#c8c8c8"/><rect x="168" y="289" width="3" height="1" fill="#c8c8c8"/><rect x="174" y="289" width="3" height="1" fill="#c8c8c8"/><rect x="180" y="289" width="3" height="1" fill="#c8c8c8"/><rect x="186" y="289" width="3" height="1" fill="#c8c8c8"/><rect x="192" y="289" width="3" height="1" fill="#c8c8c8"/><rect x="198" y="289" width="3" height="1" fill="#c8c8c8"/><rect x="204" y="289" width="3" height="1" fill="#c8c8c8"/><rect x="210" y="289" width="3" height="1" fill="#c8c8c8"/><rect x="216" y="289" width="3" height="1" fill="#c8c8c8"/><rect x="222" y="289" width="3" height="1" fill="#c8c8c8"/><rect x="228" y="289" width="3" height="1" fill="#c8c8c8"/><rect x="234" y="289" width="3" height="1" fill="#c8c8c8"/><rect x="240" y="289" width="3" height="1" fill="#c8c8c8"/><rect x="246" y="289" width="3" height="1" fill="#c8c8c8"/><rect x="252" y="289" width="3" height="1" fill="#c8c8c8"/><rect x="258" y="289" width="3" height="1" fill="#c8c8c8"/><rect x="264" y="289" width="3" height="1" fill="#c8c8c8"/><rect x="270" y="289" width="3" height="1" fill="#c8c8c8"/><rect x="276" y="289" width="3" height="1" fill="#c8c8c8"/><rect x="282" y="289" width="3" height="1" fill="#c8c8c8"/><rect x="288" y="289" width="3" height="1" fill="#c8c8c8"/><rect x="294" y="289" width="3" height="1" fill="#c8c8c8"/><rect x="300" y="289" width="3" height="1" fill="#c8c8c8"/><rect x="306" y="289" width="3" height="1" fill="#c8c8c8"/><rect x="312" y="289" width="3" height="1" fill="#c8c8c8"/><rect x="318" y="289" width="3" height="1" fill="#c8c8c8"/><rect x="324" y="289" width="3" height="1" fill="#c8c8c8"/><rect x="330" y="289" width="3" height="1" fill="#c8c8c8"/><rect x="336" y="289" width="3" height="1" fill="#c8c8c8"/><rect x="342" y="289" width="3" height="1" fill="#c8c8c8"/><rect x="348" y="289" width="3" height="1" fill="#c8c8c8"/><rect x="354" y="289" width="3" height="1" fill="#c8c8c8"/><rect x="360" y="289" width="3" height="1" fill="#c8c8c8"/><rect x="366" y="289" width="3" height="1" fill="#c8c8c8"/><rect x="372" y="289" width="3" height="1" fill="#c8c8c8"/><rect x="378" y="289" width="3" height="1" fill="#c8c8c8"/><rect x="384" y="289" width="3" height="1" fill="#c8c8c8"/><rect x="390" y="289" width="3" height="1" fill="#c8c8c8"/><rect x="396" y="289" width="3" height="1" fill="#c8c8c8"/><rect x="402" y="289" width="3" height="1" fill="#c8c8c8"/><rect x="408" y="289" width="3" height="1" fill="#c8c8c8"/><rect x="414" y="289" width="3" height="1" fill="#c8c8c8"/><rect x="420" y="289" width="3" height="1" fill="#c8c8c8"/><rect x="426" y="289" width="3" height="1" fill="#c8c8c8"/><rect x="432" y="289" width="3" height="1" fill="#c8c8c8"/><rect x="438" y="289" width="3" height="1" fill="#c8c8c8"/><rect x="444" y="289" width="3" height="1" fill="#c8c8c8"/><rect x="450" y="289" width="3" height="1" fill="#c8c8c8"/><rect x="456" y="289" width="3" height="1" fill="#c8c8c8"/><rect x="462" y="289" width="3" height="1" fill="#c8c8c8"/><rect x="468" y="289" width="3" height="1" fill="#c8c8c8"/><rect x="474" y="289" width="3" height="1" fill="#c8c8c8"/><rect x="480" y="289" width="3" height="1" fill="#c8c8c8"/><rect x="486" y="289" width="3" height="1" fill="#c8c8c8"/><rect x="492" y="289" width="3" height="1" fill="#c8c8c8"/><rect x="498" y="289" width="3" height="1" fill="#c8c8c8"/><rect x="504" y="289" width="3" height="1" fill="#c8c8c8"/><rect x="510" y="289" width="3" height="1" fill="#c8c8c8"/><rect x="516" y="289" width="3" height="1" fill="#c8c8c8"/><rect x="522" y="289" width="3" height="1" fill="#c8c8c8"/><rect x="528" y="289" width="3" height="1" fill="#c8c8c8"/><rect x="534" y="289" width="3" height="1" fill="#c8c8c8"/><rect x="540" y="289" width="3" height="1" fill="#c8c8c8"/><rect x="546" y="289" width="3" height="1" fill="#c8c8c8"/><rect x="552" y="289" width="3" height="1" fill="#c8c8c8"/><rect x="558" y="289" width="3" height="1" fill="#c8c8c8"/><rect x="564" y="289" width="3" height="1" fill="#c8c8c8"/><rect x="570" y="289" width="3" height="1" fill="#c8c8c8"/><rect x="576" y="289" width="3" height="1" fill="#c8c8c8"/><rect x="582" y="289" width="3" height="1" fill="#c8c8c8"/><rect x="588" y="289" width="3" height="1" fill="#c8c8c8"/><rect x="594" y="289" width="3" height="1" fill="#c8c8c8"/><rect x="600" y="289" width="3" height="1" fill="#c8c8c8"/><rect x="606" y="289" width="3" height="1" fill="#c8c8c8"/><rect x="612" y="289" width="3" height="1" fill="#c8c8c8"/><rect x="618" y="289" width="3" height="1" fill="#c8c8c8"/><rect x="624" y="289" width="3" height="1" fill="#c8c8c8"/><rect x="630" y="289" width="2" height="1" fill="#c8c8c8"/><rect x="9" y="193" width="627" height="1" fill="#fff"/><rect x="24" y="192" width="1" height="4" fill="#fff"/><rect x="37" y="192" width="1" height="4" fill="#fff"/><rect x="49" y="192" width="1" height="4" fill="#fff"/><rect x="62" y="192" width="1" height="4" fill="#fff"/><rect x="74" y="192" width="1" height="4" fill="#fff"/><rect x="86" y="192" width="1" height="4" fill="#fff"/><rect x="99" y="192" width="1" height="4" fill="#fff"/><rect x="111" y="192" width="1" height="4" fill="#fff"/><rect x="124" y="192" width="1" height="4" fill="#fff"/><rect x="136" y="192" width="1" height="4" fill="#fff"/><rect x="148" y="192" width="1" height="4" fill="#fff"/><rect x="161" y="192" width="1" height="4" fill="#fff"/><rect x="173" y="192" width="1" height="4" fill="#fff"/><rect x="186" y="192" width="1" height="4" fill="#fff"/><rect x="198" y="192" width="1" height="4" fill="#fff"/><rect x="210" y="192" width="1" height="4" fill="#fff"/><rect x="223" y="192" width="1" height="4" fill="#fff"/><rect x="235" y="192" width="1" height="4" fill="#fff"/><rect x="248" y="192" width="1" height="4" fill="#fff"/><rect x="260" y="192" width="1" height="4" fill="#fff"/><rect x="272" y="192" width="1" height="4" fill="#fff"/><rect x="285" y="192" width="1" height="4" fill="#fff"/><rect x="297" y="192" width="1" height="4" fill="#fff"/><rect x="310" y="192" width="1" height="4" fill="#fff"/><rect x="322" y="192" width="1" height="4" fill="#fff"/><rect x="334" y="192" width="1" height="4" fill="#fff"/><rect x="347" y="192" width="1" height="4" fill="#fff"/><rect x="359" y="192" width="1" height="4" fill="#fff"/><rect x="372" y="192" width="1" height="4" fill="#fff"/><rect x="384" y="192" width="1" height="4" fill="#fff"/><rect x="396" y="192" width="1" height="4" fill="#fff"/><rect x="409" y="192" width="1" height="4" fill="#fff"/><rect x="421" y="192" width="1" height="4" fill="#fff"/><rect x="434" y="192" width="1" height="4" fill="#fff"/><rect x="446" y="192" width="1" height="4" fill="#fff"/><rect x="458" y="192" width="1" height="4" fill="#fff"/><rect x="471" y="192" width="1" height="4" fill="#fff"/><rect x="483" y="192" width="1" height="4" fill="#fff"/><rect x="496" y="192" width="1" height="4" fill="#fff"/><rect x="508" y="192" width="1" height="4" fill="#fff"/><rect x="520" y="192" width="1" height="4" fill="#fff"/><rect x="533" y="192" width="1" height="4" fill="#fff"/><rect x="545" y="192" width="1" height="4" fill="#fff"/><rect x="558" y="192" width="1" height="4" fill="#fff"/><rect x="570" y="192" width="1" height="4" fill="#fff"/><rect x="582" y="192" width="1" height="4" fill="#fff"/><rect x="595" y="192" width="1" height="4" fill="#fff"/><rect x="607" y="192" width="1" height="4" fill="#fff"/><rect x="620" y="192" width="1" height="4" fill="#fff"/><rect x="74" y="191" width="1" height="7" fill="#fff"/><rect x="136" y="191" width="1" height="7" fill="#fff"/><rect x="198" y="191" width="1" height="7" fill="#fff"/><rect x="260" y="191" width="1" height="7" fill="#fff"/><rect x="322" y="191" width="1" height="7" fill="#fff"/><rect x="384" y="191" width="1" height="7" fill="#fff"/><rect x="446" y="191" width="1" height="7" fill="#fff"/><rect x="508" y="191" width="1" height="7" fill="#fff"/><rect x="570" y="191" width="1" height="7" fill="#fff"/><polyline fill="none" stroke="#ff0000" stroke-width="1" points="12.5,151.8 13.5,149.6 14.5,147.8 15.5,146.6 16.5,145.8 17.5,145.5 18.5,145.7 19.5,146.4 20.5,147.6 21.5,149.2 22.5,151.3 23.5,153.8 24.5,156.8 25.5,160.1 26.5,163.7 27.5,167.7 28.5,171.9 29.5,176.4 30.5,181.0 31.5,185.8 32.5,190.6 33.5,195.4 34.5,200.3 35.5,205.1 36.5,209.7 37.5,214.2 38.5,218.5 39.5,222.5 40.5,226.2 41.5,229.6 42.5,232.6 43.5,235.2 44.5,237.4 45.5,239.2 46.5,240.4 47.5,241.2 48.5,241.5 49.5,241.3 50.5,240.6 51.5,239.4 52.5,237.8 53.5,235.7 54.5,233.2 55.5,230.2 56.5,226.9 57.5,223.3 58.5,219.3 59.5,215.1 60.5,210.6 61.5,206.0 62.5,201.2 63.5,196.4 64.5,191.6 65.5,186.7 66.5,181.9 67.5,177.3 68.5,172.8 69.5,168.5 70.5,164.5 71.5,160.8 72.5,157.4 73.5,154.4 74.5,151.8 75.5,149.6 76.5,147.8 77.5,146.6 78.5,145.8 79.5,145.5 80.5,145.7 81.5,146.4 82.5,147.6 83.5,149.2 84.5,151.3 85.5,153.8 86.5,156.8 87.5,160.1 88.5,163.7 89.5,167.7 90.5,171.9 91.5,176.4 92.5,181.0 93.5,185.8 94.5,190.6 95.5,195.4 96.5,200.3 97.5,205.1 98.5,209.7 99.5,214.2 100.5,218.5 101.5,222.5 102.5,226.2 103.5,229.6 104.5,232.6 105.5,235.2 106.5,237.4 107.5,239.2 108.5,240.4 109.5,241.2 110.5,241.5 111.5,241.3 112.5,240.6 113.5,239.4 114.5,237.8 115.5,235.7 116.5,233.2 117.5,230.2 118.5,226.9 119.5,223.3 120.5,219.3 121.5,215.1 122.5,210.6 123.5,206.0 124.5,201.2 125.5,196.4 126.5,191.6 127.5,186.7 128.5,181.9 129.5,177.3 130.5,172.8 131.5,168.5 132.5,164.5 133.5,160.8 134.5,157.4 135.5,154.4 136.5,151.8 137.5,149.6 138.5,147.8 139.5,146.6 140.5,145.8 141.5,145.5 142.5,145.7 143.5,146.4 144.5,147.6 145.5,149.2 146.5,151.3 147.5,153.8 148.5,156.8 149.5,160.1 150.5,163.7 151.5,167.7 152.5,171.9 153.5,176.4 154.5,181.0 155.5,185.8 156.5,190.6 157.5,195.4 158.5,200.3 159.5,205.1 160.5,209.7 161.5,214.2 162.5,218.5 163.5,222.5 164.5,226.2 165.5,229.6 166.5,232.6 167.5,235.2 168.5,237.4 169.5,239.2 170.5,240.4 171.5,241.2 172.5,241.5 173.5,241.3 174.5,240.6 175.5,239.4 176.5,237.8 177.5,235.7 178.5,233.2 179.5,230.2 180.5,226.9 181.5,223.3 182.5,219.3 183.5,215.1 184.5,210.6 185.5,206.0 186.5,201.2 187.5,196.4 188.5,191.6 189.5,186.7 190.5,181.9 191.5,177.3 192.5,172.8 193.5,168.5 194.5,164.5 195.5,160.8 196.5,157.4 197.5,154.4 198.5,151.8 199.5,149.6 200.5,147.8 201.5,146.6 202.5,145.8 203.5,145.5 204.5,145.7 205.5,146.4 206.5,147.6 207.5,149.2 208.5,151.3 209.5,153.8 210.5,156.8 211.5,160.1 212.5,163.7 213.5,167.7 214.5,171.9 215.5,176.4 216.5,181.0 217.5,185.8 218.5,190.6 219.5,195.4 220.5,200.3 221.5,205.1 222.5,209.7 223.5,214.2 224.5,218.5 225.5,222.5 226.5,226.2 227.5,229.6 228.5,232.6 229.5,235.2 230.5,237.4 231.5,239.2 232.5,240.4 233.5,241.2 234.5,241.5 235.5,241.3 236.5,240.6 237.5,239.4 238.5,237.8 239.5,235.7 240.5,233.2 241.5,230.2 242.5,226.9 243.5,223.3 244.5,219.3 245.5,215.1 246.5,210.6 247.5,206.0 248.5,201.2 249.5,196.4 250.5,191.6 251.5,186.7 252.5,181.9 253.5,177.3 254.5,172.8 255.5,168.5 256.5,164.5 257.5,160.8 258.5,157.4 259.5,154.4 260.5,151.8 261.5,149.6 262.5,147.8 263.5,146.6 264.5,145.8 265.5,145.5 266.5,145.7 267.5,146.4 268.5,147.6 269.5,149.2 270.5,151.3 271.5,153.8 272.5,156.8 273.5,160.1 274.5,163.7 275.5,167.7 276.5,171.9 277.5,176.4 278.5,181.0 279.5,185.8 280.5,190.6 281.5,195.4 282.5,200.3 283.5,205.1 284.5,209.7 285.5,214.2 286.5,218.5 287.5,222.5 288.5,226.2 289.5,229.6 290.5,232.6 291.5,235.2 292.5,237.4 293.5,239.2 294.5,240.4 295.5,241.2 296.5,241.5 297.5,241.3 298.5,240.6 299.5,239.4 300.5,237.8 301.5,235.7 302.5,233.2 303.5,230.2 304.5,226.9 305.5,223.3 306.5,219.3 307.5,215.1 308.5,210.6 309.5,206.0 310.5,201.2 311.5,196.4 312.5,191.6 313.5,186.7 314.5,181.9 315.5,177.3 316.5,172.8 317.5,168.5 318.5,164.5 319.5,160.8 320.5,157.4 321.5,154.4 322.5,151.8 323.5,149.6 324.5,147.8 325.5,146.6 326.5,145.8 327.5,145.5 328.5,145.7 329.5,146.4 330.5,147.6 331.5,149.2 332.5,151.3 333.5,153.8 334.5,156.8 335.5,160.1 336.5,163.7 337.5,167.7 338.5,171.9 339.5,176.4 340.5,181.0 341.5,185.8 342.5,190.6 343.5,195.4 344.5,200.3 345.5,205.1 346.5,209.7 347.5,214.2 348.5,218.5 349.5,222.5 350.5,226.2 351.5,229.6 352.5,232.6 353.5,235.2 354.5,237.4 355.5,239.2 356.5,240.4 357.5,241.2 358.5,241.5 359.5,241.3 360.5,240.6 361.5,239.4 362.5,237.8 363.5,235.7 364.5,233.2 365.5,230.2 366.5,226.9 367.5,223.3 368.5,219.3 369.5,215.1 370.5,210.6 371.5,206.0 372.5,201.2 373.5,196.4 374.5,191.6 375.5,186.7 376.5,181.9 377.5,177.3 378.5,172.8 379.5,168.5 380.5,164.5 381.5,160.8 382.5,157.4 383.5,154.4 384.5,151.8 385.5,149.6 386.5,147.8 387.5,146.6 388.5,145.8 389.5,145.5 390.5,145.7 391.5,146.4 392.5,147.6 393.5,149.2 394.5,151.3 395.5,153.8 396.5,156.8 397.5,160.1 398.5,163.7 399.5,167.7 400.5,171.9 401.5,176.4 402.5,181.0 403.5,185.8 404.5,190.6 405.5,195.4 406.5,200.3 407.5,205.1 408.5,209.7 409.5,214.2 410.5,218.5 411.5,222.5 412.5,226.2 413.5,229.6 414.5,232.6 415.5,235.2 416.5,237.4 417.5,239.2 418.5,240.4 419.5,241.2 420.5,241.5 421.5,241.3 422.5,240.6 423.5,239.4 424.5,237.8 425.5,235.7 426.5,233.2 427.5,230.2 428.5,226.9 429.5,223.3 430.5,219.3 431.5,215.1 432.5,210.6 433.5,206.0 434.5,201.2 435.5,196.4 436.5,191.6 437.5,186.7 438.5,181.9 439.5,177.3 440.5,172.8 441.5,168.5 442.5,164.5 443.5,160.8 444.5,157.4 445.5,154.4 446.5,151.8 447.5,149.6 448.5,147.8 449.5,146.6"/><rect x="12" y="49" width="1" height="288" fill="#00ff00"/><rect x="12" y="337" width="1" height="1" fill="#fff"/><rect x="4" y="41" width="17" height="1" fill="#00ffff"/><rect x="5" y="42" width="15" height="1" fill="#00ffff"/><rect x="6" y="43" width="13" height="1" fill="#ff00ff"/><rect x="7" y="44" width="11" height="1" fill="#ff00ff"/><rect x="8" y="45" width="9" height="1" fill="#ff00ff"/><rect x="9" y="46" width="7" height="1" fill="#ff00ff"/><rect x="10" y="47" width="5" height="1" fill="#ff00ff"/><rect x="11" y="48" width="3" height="1" fill="#ff00ff"/><rect x="10" y="42" width="3" height="1" fill="#000"/><rect x="11" y="43" width="2" height="1" fill="#ffff00"/><rect x="11" y="44" width="2" height="1" fill="#000"/><rect x="11" y="45" width="1" height="1" fill="#ffff00"/><rect x="13" y="45" width="1" height="1" fill="#00ffff"/><rect x="11" y="46" width="2" height="1" fill="#000"/><rect x="11" y="47" width="3" height="1" fill="#00ffff"/><rect x="10" y="150" width="4" height="1" fill="#ff00ff"/><rect x="9" y="151" width="1" height="4" fill="#ff00ff"/><rect x="14" y="151" width="1" height="2" fill="#ff00ff"/><rect x="15" y="153" width="1" height="1" fill="#ff00ff"/><rect x="14" y="154" width="1" height="1" fill="#ff00ff"/><rect x="10" y="155" width="2" height="1" fill="#ff00ff"/><rect x="13" y="155" width="2" height="1" fill="#ff00ff"/><rect x="12" y="150" width="1" height="1" fill="#fff"/><rect x="12" y="156" width="1" height="1" fill="#fff"/><rect x="12" y="151" width="1" height="4" fill="#0000ff"/></svg>
<span class="t" style="left:11.30px;top:11px;font-size:15px;letter-spacing:-0.406px;color:#161616;">Oscilloscope-XSC1</span>
<svg style="position:absolute;left:614px;top:11px" width="16" height="16" viewBox="0 0 16 16"><path d="M2.2 2.2 L13.8 13.8 M13.8 2.2 L2.2 13.8" stroke="#1a1a1a" stroke-width="1.2" fill="none"/></svg>
<div class="etw" style="left:2px;top:369px;width:67px;height:71px"></div><div class="etg" style="left:1px;top:368px;width:67px;height:71px"></div>
<span class="t" style="left:8.00px;top:381px;font-size:12px;letter-spacing:0.000px;color:#000;">T1</span>
<span class="t" style="left:8.00px;top:399px;font-size:12px;letter-spacing:0.000px;color:#000;">T2</span>
<span class="t" style="left:8.00px;top:423px;font-size:12px;letter-spacing:0.400px;color:#000;">T2-T1</span>
<div class="b" style="left:31px;top:377px;width:14px;height:18px;border-radius:3px"></div>
<svg style="position:absolute;left:0;top:0" width="644" height="549"><path d="M33.5,386.7 L39.0,381.2 L39.0,384.7 L44.5,384.7 L44.5,388.7 L39.0,388.7 L39.0,392.2 Z" fill="#000"/></svg>
<div class="b" style="left:51px;top:377px;width:13px;height:18px;border-radius:3px"></div>
<svg style="position:absolute;left:0;top:0" width="644" height="549"><path d="M64.0,386.7 L58.5,381.2 L58.5,384.7 L53.0,384.7 L53.0,388.7 L58.5,388.7 L58.5,392.2 Z" fill="#000"/></svg>
<div class="b" style="left:31px;top:399px;width:14px;height:16px;border-radius:3px"></div>
<svg style="position:absolute;left:0;top:0" width="644" height="549"><path d="M33.5,407.7 L39.0,402.2 L39.0,405.7 L44.5,405.7 L44.5,409.7 L39.0,409.7 L39.0,413.2 Z" fill="#000"/></svg>
<div class="b" style="left:51px;top:399px;width:13px;height:16px;border-radius:3px"></div>
<svg style="position:absolute;left:0;top:0" width="644" height="549"><path d="M64.0,407.7 L58.5,402.2 L58.5,405.7 L53.0,405.7 L53.0,409.7 L58.5,409.7 L58.5,413.2 Z" fill="#000"/></svg>
<div class="sunk2" style="left:71px;top:368px;width:376px;height:72px"><div></div></div>
<span class="t" style="left:105.60px;top:373px;font-size:12px;letter-spacing:0.416px;color:#000;">Time</span>
<span class="t" style="left:181.60px;top:373px;font-size:12px;letter-spacing:0.114px;color:#000;">Channel_A</span>
<span class="t" style="left:277.40px;top:373px;font-size:12px;letter-spacing:0.058px;color:#000;">Channel_B</span>
<span class="t" style="left:81.40px;top:389px;font-size:12px;letter-spacing:0.354px;color:#000;">270.937&nbsp;us</span>
<span class="t" style="left:177.40px;top:389px;font-size:12px;letter-spacing:0.381px;color:#000;">851.743&nbsp;mV</span>
<span class="t" style="left:81.40px;top:405px;font-size:12px;letter-spacing:0.354px;color:#000;">270.937&nbsp;us</span>
<span class="t" style="left:177.40px;top:405px;font-size:12px;letter-spacing:0.381px;color:#000;">851.743&nbsp;mV</span>
<span class="t" style="left:93.60px;top:421px;font-size:12px;letter-spacing:0.294px;color:#000;">0.000&nbsp;s</span>
<span class="t" style="left:189.40px;top:421px;font-size:12px;letter-spacing:0.094px;color:#000;">0.000&nbsp;V</span>
<div style="position:absolute;left:504px;top:356px;width:118px;height:1px;background:#a0a0a0"></div>
<div class="b" style="left:457px;top:377px;width:69px;height:24px"></div>
<span class="t" style="left:470.00px;top:385px;font-size:12px;letter-spacing:0.045px;color:#000;">Reverse</span>
<div class="b" style="left:457px;top:411px;width:69px;height:24px"></div>
<span class="t" style="left:479.00px;top:419px;font-size:12px;letter-spacing:-0.086px;color:#000;">Save</span>
<span class="t" style="left:540.70px;top:431px;font-size:12px;letter-spacing:0.392px;color:#000;">Ext.&nbsp;trigger</span>
<div class="radio" style="left:608px;top:430.1px;width:13.8px;height:13.8px"></div>
<div style="position:absolute;left:0;top:547px;width:644px;height:1px;background:#bcbcbc"></div>
<div class="g" style="left:1px;top:458px;width:152px;height:87px"></div>
<div style="position:absolute;left:7.199999999999999px;top:457px;width:60.39999999999999px;height:3px;background:#f0f0f0"></div>
<span class="t" style="left:10.20px;top:453px;font-size:12px;letter-spacing:0.394px;color:#000;">Timebase</span>
<span class="t" style="left:4.30px;top:475px;font-size:12px;letter-spacing:0.293px;color:#000;">Scale:</span>
<div class="e" style="left:48px;top:466px;width:100px;height:24px"></div>
<span class="t" style="left:54.70px;top:472px;font-size:12px;letter-spacing:0.245px;color:#000;">5&nbsp;us/Div</span>
<span class="t" style="left:4.20px;top:499px;font-size:12px;letter-spacing:0.344px;color:#000;">X&nbsp;pos.(Div):</span>
<div class="e" style="left:76px;top:492px;width:72px;height:24px"></div>
<span class="t" style="left:82.60px;top:498px;font-size:12px;letter-spacing:0.000px;color:#000;">0</span>
<div class="b s" style="left:10px;top:521px;width:26px;height:20px"></div>
<span class="t" style="left:14.00px;top:527px;font-size:12px;letter-spacing:0.448px;color:#000;">Y/T</span>
<div class="b" style="left:40px;top:521px;width:29px;height:20px"></div>
<span class="t" style="left:44.75px;top:527px;font-size:12px;letter-spacing:0.052px;color:#000;">Add</span>
<div class="b" style="left:76px;top:521px;width:28px;height:20px"></div>
<span class="t" style="left:81.40px;top:527px;font-size:12px;letter-spacing:-0.043px;color:#000;">B/A</span>
<div class="b" style="left:109px;top:521px;width:29px;height:20px"></div>
<span class="t" style="left:114.90px;top:527px;font-size:12px;letter-spacing:-0.043px;color:#000;">A/B</span>
<div class="g" style="left:155px;top:458px;width:148px;height:87px"></div>
<div style="position:absolute;left:161.4px;top:457px;width:62.599999999999994px;height:3px;background:#f0f0f0"></div>
<span class="t" style="left:164.40px;top:453px;font-size:12px;letter-spacing:0.247px;color:#000;">Channel&nbsp;A</span>
<span class="t" style="left:158.30px;top:475px;font-size:12px;letter-spacing:0.293px;color:#000;">Scale:</span>
<div class="e" style="left:200px;top:466px;width:102px;height:24px"></div>
<span class="t" style="left:206.60px;top:472px;font-size:12px;letter-spacing:0.275px;color:#000;">1&nbsp;&nbsp;V/Div</span>
<span class="t" style="left:157.80px;top:499px;font-size:12px;letter-spacing:0.362px;color:#000;">Y&nbsp;pos.(Div):</span>
<div class="e" style="left:230px;top:492px;width:72px;height:24px"></div>
<span class="t" style="left:236.50px;top:498px;font-size:12px;letter-spacing:0.000px;color:#000;">0</span>
<div class="b s" style="left:159px;top:521px;width:26px;height:20px"></div>
<span class="t" style="left:164.66px;top:527px;font-size:12px;letter-spacing:0.000px;color:#000;">AC</span>
<div class="b" style="left:189px;top:521px;width:27px;height:20px"></div>
<span class="t" style="left:200.16px;top:527px;font-size:12px;letter-spacing:0.000px;color:#000;">0</span>
<div class="b" style="left:220px;top:521px;width:28px;height:20px"></div>
<span class="t" style="left:226.33px;top:527px;font-size:12px;letter-spacing:0.000px;color:#000;">DC</span>
<div class="ring" style="left:280px;top:522.9px"></div>
<div class="g" style="left:305px;top:458px;width:152px;height:87px"></div>
<div style="position:absolute;left:311.5px;top:457px;width:61.19999999999999px;height:3px;background:#f0f0f0"></div>
<span class="t" style="left:314.50px;top:453px;font-size:12px;letter-spacing:0.019px;color:#000;">Channel&nbsp;B</span>
<span class="t" style="left:309.60px;top:475px;font-size:12px;letter-spacing:0.209px;color:#000;">Scale:</span>
<div class="e" style="left:354px;top:466px;width:102px;height:24px"></div>
<span class="t" style="left:360.70px;top:472px;font-size:12px;letter-spacing:0.288px;color:#000;">5&nbsp;&nbsp;V/Div</span>
<span class="t" style="left:309.20px;top:499px;font-size:12px;letter-spacing:0.346px;color:#000;">Y&nbsp;pos.(Div):</span>
<div class="e" style="left:384px;top:492px;width:72px;height:24px"></div>
<span class="t" style="left:390.80px;top:498px;font-size:12px;letter-spacing:0.000px;color:#000;">0</span>
<div class="b" style="left:311px;top:523px;width:26px;height:20px"></div>
<span class="t" style="left:316.66px;top:529px;font-size:12px;letter-spacing:0.000px;color:#000;">AC</span>
<div class="b" style="left:341px;top:523px;width:24px;height:20px"></div>
<span class="t" style="left:350.66px;top:529px;font-size:12px;letter-spacing:0.000px;color:#000;">0</span>
<div class="b s" style="left:369px;top:523px;width:28px;height:20px"></div>
<span class="t" style="left:375.33px;top:529px;font-size:12px;letter-spacing:0.000px;color:#000;">DC</span>
<div class="b" style="left:401px;top:523px;width:19px;height:20px"></div>
<span class="t" style="left:409.50px;top:529px;font-size:12px;letter-spacing:0.000px;color:#000;">-</span>
<div class="radio" style="left:440.3px;top:525.4px"></div>
<div class="g" style="left:459px;top:458px;width:180px;height:87px"></div>
<div style="position:absolute;left:464.9px;top:457px;width:46.700000000000045px;height:3px;background:#f0f0f0"></div>
<span class="t" style="left:467.90px;top:453px;font-size:12px;letter-spacing:0.589px;color:#000;">Trigger</span>
<span class="t" style="left:464.50px;top:475px;font-size:12px;letter-spacing:0.171px;color:#000;">Edge:</span>
<div class="b s" style="left:516px;top:471px;width:17px;height:18px"></div>
<div class="b" style="left:537px;top:471px;width:17px;height:18px"></div>
<div class="b s" style="left:562px;top:471px;width:18px;height:20px"></div>
<span class="t" style="left:568.00px;top:477px;font-size:12px;letter-spacing:0.000px;color:#000;">A</span>
<div class="b" style="left:584px;top:471px;width:19px;height:20px"></div>
<span class="t" style="left:590.50px;top:477px;font-size:12px;letter-spacing:0.000px;color:#000;">B</span>
<div class="b" style="left:607px;top:471px;width:22px;height:20px"></div>
<span class="t" style="left:610.25px;top:477px;font-size:12px;letter-spacing:0.057px;color:#000;">Ext</span>
<span class="t" style="left:464.50px;top:499px;font-size:12px;letter-spacing:0.181px;color:#000;">Level:</span>
<div class="e" style="left:515px;top:496px;width:83px;height:24px"></div>
<span class="t" style="left:521.00px;top:502px;font-size:12px;letter-spacing:0.000px;color:#000;">0</span>
<div class="e" style="left:599px;top:496px;width:33px;height:24px"></div>
<span class="t" style="left:608.00px;top:501px;font-size:12px;letter-spacing:0.000px;color:#000;">V</span>
<div class="b" style="left:465px;top:521px;width:42px;height:20px"></div>
<span class="t" style="left:470.25px;top:527px;font-size:12px;letter-spacing:0.023px;color:#000;">Single</span>
<div class="b" style="left:511px;top:521px;width:47px;height:20px"></div>
<span class="t" style="left:516.00px;top:527px;font-size:12px;letter-spacing:0.052px;color:#000;">Normal</span>
<div class="b s" style="left:562px;top:521px;width:32px;height:20px"></div>
<div class="f" style="left:564px;top:523px;width:28px;height:16px"></div>
<span class="t" style="left:566.66px;top:527px;font-size:12px;letter-spacing:0.000px;color:#000;">Auto</span>
<div class="b" style="left:597px;top:521px;width:36px;height:20px"></div>
<span class="t" style="left:601.66px;top:527px;font-size:12px;letter-spacing:0.000px;color:#000;">None</span>
<svg style="position:absolute;left:0;top:0" width="644" height="549"><g fill="#b4b4b4"><rect x="636" y="541" width="2" height="2"/><rect x="640" y="537" width="2" height="2"/><rect x="640" y="541" width="2" height="2"/><rect x="632" y="545" width="2" height="1.5"/><rect x="636" y="545" width="2" height="1.5"/></g></svg>
<svg style="position:absolute;left:0;top:0" width="644" height="549" shape-rendering="crispEdges"><path d="M520 485.5 H525.5 V476.5 H531 M523 482.5 L525.5 480 L528 482.5" stroke="#000" fill="none"/><path d="M541 475.5 H546.5 V484 H552 M546 483.5 H552 M544 478 L546.5 480.5 L549 478" stroke="#000" fill="none"/></svg>
</div></div>
</body></html>
